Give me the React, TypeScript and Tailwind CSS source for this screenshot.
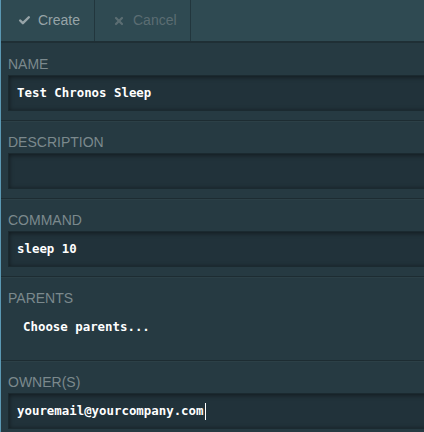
import { Check, X } from 'lucide-react';

const sans = "font-['Liberation_Sans',Arial,sans-serif]";
const mono = "font-['DejaVu_Sans_Mono','Liberation_Mono',monospace]";

function Field({
  label,
  value,
  boxed = true,
  caret = false,
  tall = false,
}: {
  label: string;
  value: string;
  boxed?: boolean;
  caret?: boolean;
  tall?: boolean;
}) {
  return (
    <div
      className={`${tall ? 'h-[84px]' : 'h-[78px]'} border-b border-[#1d2c32] pt-[14px] pl-[7px] shadow-[0_1px_0_rgba(255,255,255,0.03)]`}
    >
      <div className={`${sans} text-[14px] leading-[14px] text-[#7b898d] uppercase`}>{label}</div>
      {boxed ? (
        <div className="mt-[4px] h-[36px] w-[440px] bg-[#21323a] border border-[#1b2a30] shadow-[inset_0_1px_5px_rgba(0,0,0,0.5)] flex items-center pl-[8px]">
          <span className={`${mono} text-[12.4px] font-bold text-white`}>{value}</span>
          {caret && <span className="ml-px inline-block w-px h-[17px] bg-white" />}
        </div>
      ) : (
        <div className="mt-[4px] h-[36px] flex items-center pl-[15px]">
          <span className={`${mono} text-[12.4px] font-bold text-white`}>{value}</span>
        </div>
      )}
    </div>
  );
}

export default function App() {
  return (
    <div className="w-[424px] h-[432px] overflow-hidden bg-[#263a42] border-l border-[#5b98b3]">
      {/* toolbar */}
      <div className="h-[43px] flex bg-[#2f4a52] border-b-2 border-[#1f2f35]">
        <div className={`${sans} w-[94px] flex items-center gap-[7px] pl-[17px] text-[14px] text-[#97a4a8] border-r border-[#22363d]`}>
          <Check size={13} strokeWidth={4.5} className="text-[#97a4a8]" />
          Create
        </div>
        <div className={`${sans} w-[96px] flex items-center gap-[8px] pl-[18px] text-[14px] text-[#5b6d72] border-r border-[#22363d]`}>
          <X size={12} strokeWidth={4.5} className="text-[#5b6d72]" />
          Cancel
        </div>
      </div>
      <div>
        <Field label="Name" value="Test Chronos Sleep" />
        <Field label="Description" value="" />
        <Field label="Command" value="sleep 10" />
        <Field label="Parents" value="Choose parents..." boxed={false} tall />
        <Field label="Owner(s)" value="youremail@yourcompany.com" caret />
      </div>
    </div>
  );
}
